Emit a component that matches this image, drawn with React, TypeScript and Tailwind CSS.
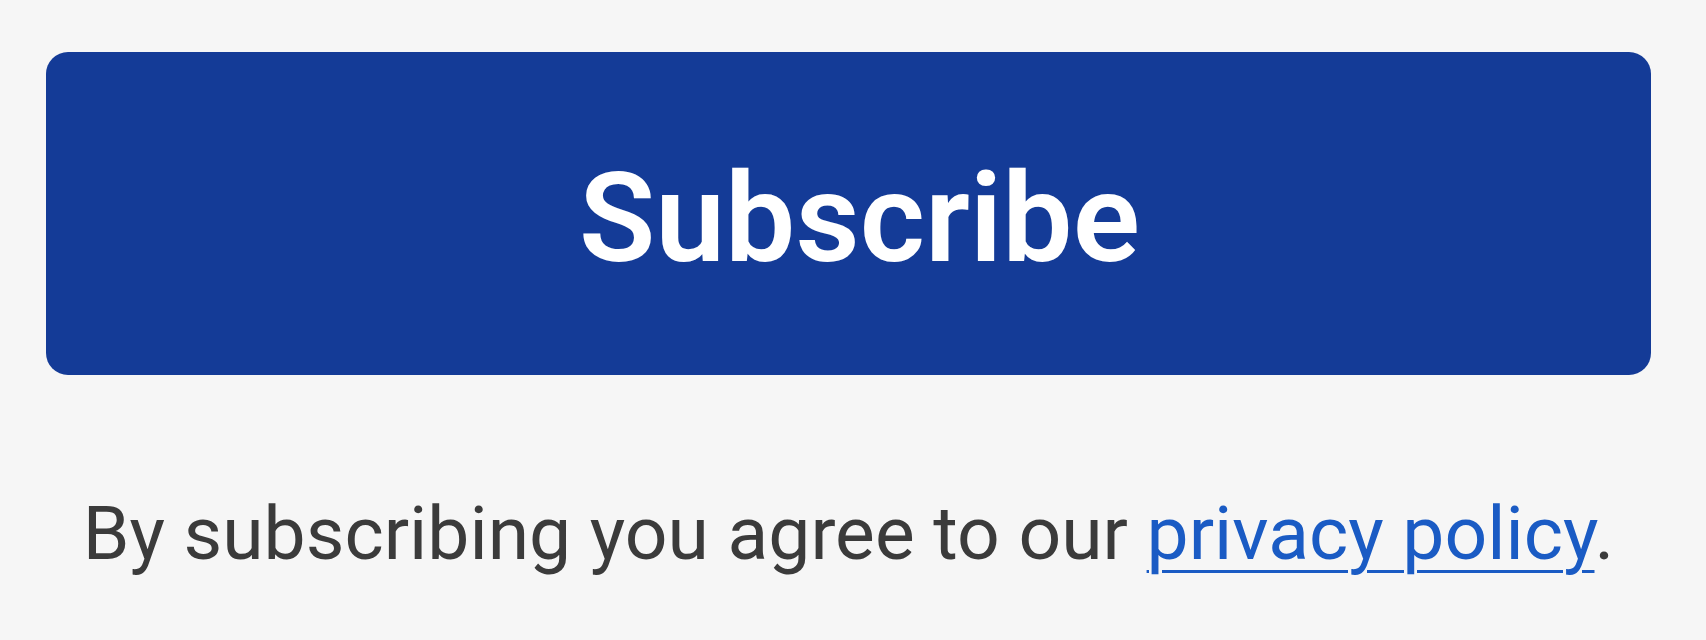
export default function App() {
  return (
    <div className="min-h-[640px] w-[1706px] bg-[#f6f6f6] pt-[52px] pl-[46px] pr-[55px] font-['Roboto',sans-serif]">
      <button
        type="button"
        className="flex h-[323px] w-[1605px] items-center justify-center rounded-[22px] bg-[#143b97] pt-[9px] pl-[22px] text-[125px] leading-none font-semibold text-white"
      >
        Subscribe
      </button>
      <p className="mt-[121px] text-center text-[75px] leading-none text-[#3b3b3b]">
        By subscribing you agree to our{" "}
        <a href="#" className="text-[#1a5bc4] underline decoration-[3px] underline-offset-[11px]">
          privacy policy
        </a>
        .
      </p>
    </div>
  );
}
